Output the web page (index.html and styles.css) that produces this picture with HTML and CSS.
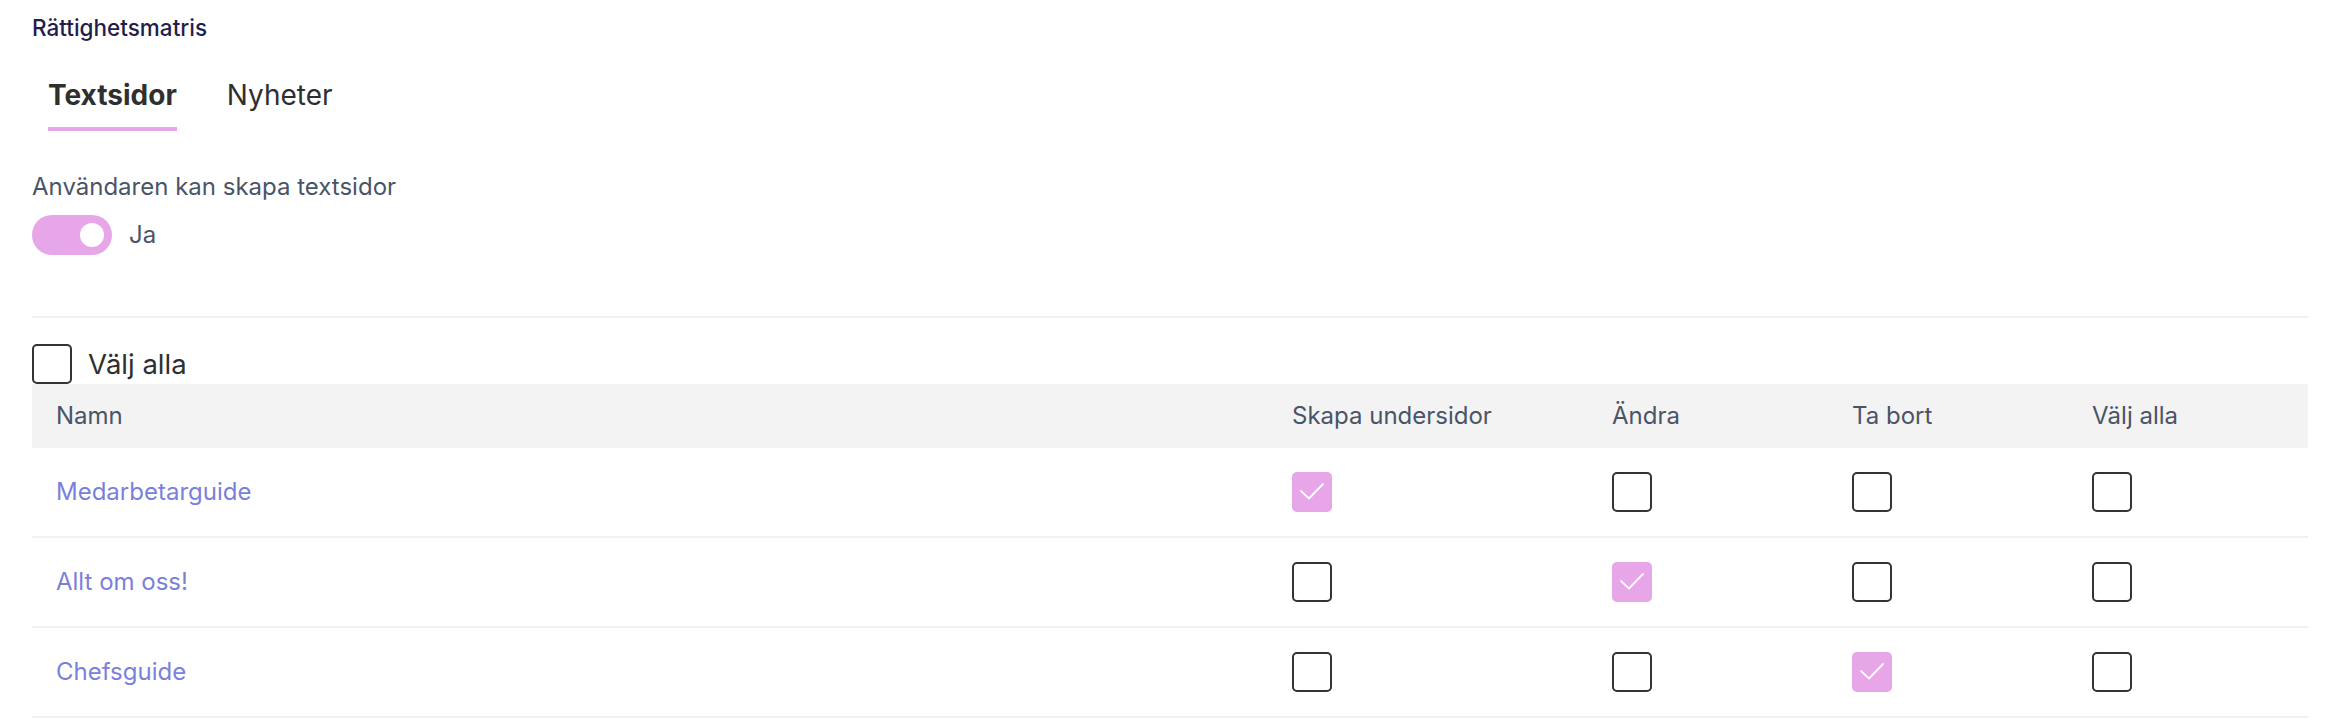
FILE: index.html
```html
<!DOCTYPE html>
<html lang="sv">
<head>
<meta charset="utf-8">
<title>Rättighetsmatris</title>
<link rel="stylesheet" href="styles.css">
</head>
<body>
<div class="page">
  <h2 class="title">Rättighetsmatris</h2>
  <nav class="tabs">
    <a class="tab active">Textsidor</a>
    <a class="tab">Nyheter</a>
  </nav>
  <div class="setting">
    <div class="setting-label">Användaren kan skapa textsidor</div>
    <div class="toggle-row">
      <span class="toggle"><span class="knob"></span></span>
      <span class="toggle-text">Ja</span>
    </div>
  </div>
  <div class="divider"></div>
  <div class="select-all">
    <span class="cb"></span>
    <span class="select-all-text">Välj alla</span>
  </div>
  <div class="matrix">
    <div class="row head">
      <div class="cell">Namn</div>
      <div class="cell">Skapa undersidor</div>
      <div class="cell">Ändra</div>
      <div class="cell">Ta bort</div>
      <div class="cell">Välj alla</div>
    </div>
    <div class="row">
      <div class="cell"><a class="link">Medarbetarguide</a></div>
      <div class="cell"><span class="cb checked"><svg viewBox="0 0 40 40"><path d="M9 20 L17 27.5 L31 13"/></svg></span></div>
      <div class="cell"><span class="cb"></span></div>
      <div class="cell"><span class="cb"></span></div>
      <div class="cell"><span class="cb"></span></div>
    </div>
    <div class="row">
      <div class="cell"><a class="link">Allt om oss!</a></div>
      <div class="cell"><span class="cb"></span></div>
      <div class="cell"><span class="cb checked"><svg viewBox="0 0 40 40"><path d="M9 20 L17 27.5 L31 13"/></svg></span></div>
      <div class="cell"><span class="cb"></span></div>
      <div class="cell"><span class="cb"></span></div>
    </div>
    <div class="row">
      <div class="cell"><a class="link">Chefsguide</a></div>
      <div class="cell"><span class="cb"></span></div>
      <div class="cell"><span class="cb"></span></div>
      <div class="cell"><span class="cb checked"><svg viewBox="0 0 40 40"><path d="M9 20 L17 27.5 L31 13"/></svg></span></div>
      <div class="cell"><span class="cb"></span></div>
    </div>
  </div>
</div>
</body>
</html>
```

FILE: styles.css
```css
* { box-sizing: border-box; }
html, body { margin: 0; padding: 0; background: #fff; }
body {
  font-family: Inter, "Noto Sans", "Liberation Sans", sans-serif;
  color: #4a5468;
}
.page {
  padding: 13px 22px 0 32px;
}
.title {
  margin: 0;
  font-size: 22.5px;
  line-height: 30px;
  font-weight: 500;
  color: #1f1e4e;
}
.tabs {
  display: flex;
  gap: 50px;
  padding-left: 16px;
  margin-top: 34px;
}
.tab {
  font-size: 28px;
  line-height: 36px;
  padding-bottom: 14px;
  border-bottom: 4px solid transparent;
  color: #2f2f2f;
  cursor: pointer;
}
.tab.active {
  font-weight: 700;
  border-bottom-color: #e6a6e8;
}
.setting { margin-top: 39px; }
.setting-label {
  font-size: 24px;
  line-height: 33.75px;
  color: #4a5468;
}
.toggle-row {
  margin-top: 11px;
  display: flex;
  align-items: center;
  gap: 17px;
}
.toggle {
  width: 80px;
  height: 40px;
  border-radius: 20px;
  background: #e6a6e8;
  display: flex;
  align-items: center;
  justify-content: flex-end;
  padding-right: 8px;
}
.knob {
  width: 24px;
  height: 24px;
  border-radius: 50%;
  background: #fff;
}
.toggle-text {
  font-size: 24px;
  line-height: 30px;
  color: #4a5468;
}
.divider {
  margin-top: 61px;
  height: 2px;
  background: #f1f1f1;
}
.select-all {
  margin-top: 26px;
  display: flex;
  align-items: center;
  gap: 16px;
  height: 40px;
}
.select-all-text {
  font-size: 27.5px;
  line-height: 36px;
  color: #2f2f2f;
}
.cb {
  display: inline-flex;
  width: 40px;
  height: 40px;
  border: 2.5px solid #333;
  border-radius: 5px;
  background: #fff;
  flex: none;
}
.cb.checked {
  border-color: #e6a6e8;
  background: #e6a6e8;
}
.cb svg {
  margin: -2.5px;
  width: 40px;
  height: 40px;
}
.cb svg path {
  fill: none;
  stroke: #fff;
  stroke-width: 1.8;
  stroke-linecap: round;
  stroke-linejoin: round;
}
.matrix { width: 100%; }
.row {
  display: grid;
  grid-template-columns: 1fr 320px 240px 240px 240px;
  align-items: center;
  height: 90px;
  border-bottom: 2px solid #f1f1f1;
}
.row.head {
  height: 64px;
  background: #f3f3f3;
  border-bottom: none;
}
.cell {
  padding-left: 24px;
  font-size: 24px;
  line-height: 30px;
  display: flex;
  align-items: center;
  color: #4a5468;
}
.link {
  color: #7b7fdc;
  cursor: pointer;
}
```
